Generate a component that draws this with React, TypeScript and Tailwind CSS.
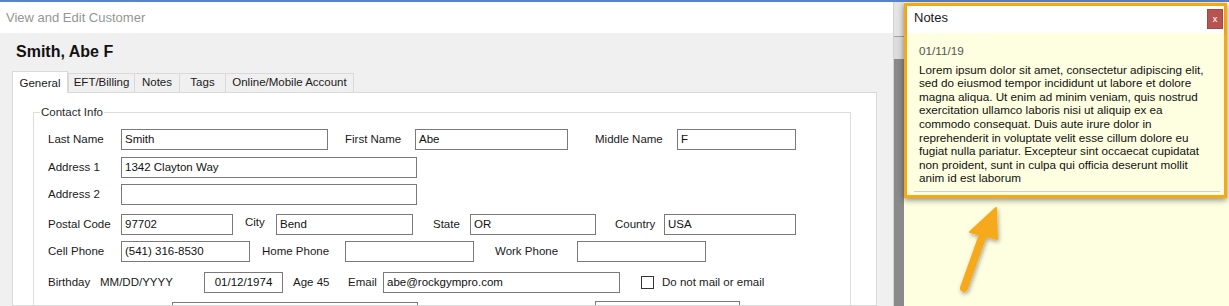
import React from 'react';

const font = "font-['Liberation_Sans',Arial,sans-serif]";

function Label({ className = '', children }: { className?: string; children?: React.ReactNode }) {
  return <span className={`shrink-0 whitespace-nowrap text-[11.5px] text-[#1a1a1a] ${className}`}>{children}</span>;
}

function Box({ className = '', value = '', center = false }: { className?: string; value?: string; center?: boolean }) {
  return (
    <div
      className={`h-[21px] shrink-0 border border-[#7a7a7a] bg-white px-[3px] text-[11.5px] leading-[19px] text-[#111] whitespace-nowrap overflow-hidden ${
        center ? 'text-center' : ''
      } ${className}`}
    >
      {value}
    </div>
  );
}

const tabs = [
  { name: 'EFT/Billing', w: 'w-[67px]' },
  { name: 'Notes', w: 'w-[45px]' },
  { name: 'Tags', w: 'w-[46px]' },
  { name: 'Online/Mobile Account', w: 'w-[128px]' },
];

const noteLines = [
  'Lorem ipsum dolor sit amet, consectetur adipiscing elit,',
  'sed do eiusmod tempor incididunt ut labore et dolore',
  'magna aliqua. Ut enim ad minim veniam, quis nostrud',
  'exercitation ullamco laboris nisi ut aliquip ex ea',
  'commodo consequat. Duis aute irure dolor in',
  'reprehenderit in voluptate velit esse cillum dolore eu',
  'fugiat nulla pariatur. Excepteur sint occaecat cupidatat',
  'non proident, sunt in culpa qui officia deserunt mollit',
  'anim id est laborum',
];

export default function App() {
  return (
    <div className={`flex h-[306px] w-[1229px] flex-col overflow-hidden bg-[#fefee0] ${font}`}>
      {/* desktop strip behind the dialog */}
      <div className="h-[2px] shrink-0 bg-[#5882c9]" />

      <div className="flex min-h-0 flex-1">
        {/* customer window */}
        <div className="flex w-[893px] shrink-0 flex-col">
          <div className="flex h-[31px] shrink-0 items-center bg-white pl-[6px] text-[13px] text-[#959595]">
            View and Edit Customer
          </div>

          <div className="flex min-h-0 flex-1 flex-col bg-[#f0f0f0] px-[12px] pt-[9px]">
            <h1 className="ml-[4px] text-[16px] font-bold leading-[20px] text-[#111]">Smith, Abe F</h1>

            <div className="mt-[9px] flex h-[21px] items-end text-[11.5px] text-[#1a1a1a]">
              <div className="relative z-10 -mb-px flex h-[22px] w-[56px] items-start justify-center border border-b-0 border-[#d9d9d9] bg-white pt-[3px]">
                General
              </div>
              {tabs.map((t, i) => (
                <div
                  key={t.name}
                  className={`flex h-[19px] items-center justify-center border-t border-r border-[#d9d9d9] bg-[#f0f0f0] ${t.w} ${
                    i === 0 ? 'border-l' : ''
                  }`}
                >
                  {t.name}
                </div>
              ))}
            </div>

            <div className="min-h-0 w-[865px] flex-1 overflow-hidden border border-[#d9d9d9] bg-white">
              <fieldset className="ml-[20px] mt-[12px] h-[400px] w-[818px] border border-[#dcdcdc] p-0">
                <legend className="ml-[6px] px-[1px] text-[11.5px] leading-[14px] text-[#2a2a2a]">Contact Info</legend>
                <div className="px-[14px] pt-[10px]">
                  <div className="flex h-[21px] items-center">
                    <Label className="w-[73px]">Last Name</Label>
                    <Box className="w-[207px]" value="Smith" />
                    <Label className="ml-[17px] w-[70px]">First Name</Label>
                    <Box className="w-[153px]" value="Abe" />
                    <Label className="ml-[27px] w-[82px]">Middle Name</Label>
                    <Box className="w-[119px]" value="F" />
                  </div>

                  <div className="mt-[7px] flex h-[21px] items-center">
                    <Label className="w-[73px]">Address 1</Label>
                    <Box className="w-[296px]" value="1342 Clayton Way" />
                  </div>

                  <div className="mt-[6px] flex h-[21px] items-center">
                    <Label className="w-[73px]">Address 2</Label>
                    <Box className="w-[296px]" />
                  </div>

                  <div className="mt-[9px] flex h-[21px] items-center">
                    <Label className="w-[73px]">Postal Code</Label>
                    <Box className="w-[112px]" value="97702" />
                    <Label className="mb-[4px] ml-[12px] w-[31px]">City</Label>
                    <Box className="w-[137px]" value="Bend" />
                    <Label className="ml-[20px] w-[37px]">State</Label>
                    <Box className="w-[126px]" value="OR" />
                    <Label className="ml-[19px] w-[49px]">Country</Label>
                    <Box className="w-[132px]" value="USA" />
                  </div>

                  <div className="mt-[6px] flex h-[21px] items-center">
                    <Label className="w-[73px]">Cell Phone</Label>
                    <Box className="w-[129px]" value="(541) 316-8530" />
                    <Label className="ml-[12px] w-[83px]">Home Phone</Label>
                    <Box className="w-[129px]" />
                    <Label className="ml-[21px] w-[82px]">Work Phone</Label>
                    <Box className="w-[129px]" />
                  </div>

                  <div className="mt-[10px] flex h-[21px] items-center">
                    <Label className="w-[52px]">Birthday</Label>
                    <Label className="w-[104px]">MM/DD/YYYY</Label>
                    <Box className="w-[79px]" value="01/12/1974" center />
                    <Label className="ml-[10px] w-[55px]">Age 45</Label>
                    <Label className="w-[35px]">Email</Label>
                    <Box className="w-[237px]" value="abe@rockgympro.com" />
                    <div className="ml-[21px] h-[13px] w-[13px] shrink-0 border border-[#333] bg-white" />
                    <Label className="ml-[8px]">Do not mail or email</Label>
                  </div>

                  <div className="mt-[9px] flex h-[21px] items-start">
                    <div className="w-[124px] shrink-0" />
                    <Box className="w-[246px]" />
                    <div className="w-[177px] shrink-0" />
                    <Box className="-mt-px w-[145px]" />
                  </div>
                </div>
              </fieldset>
            </div>
          </div>
        </div>

        {/* splitter between the windows */}
        <div className="flex w-[11px] shrink-0 flex-col border-l border-[#d2d2d2]">
          <div className="h-[35px] border-b border-[#a0a0a0] bg-[#e4e4e4]" />
          <div className="h-[22px] bg-[#dcdcdc]" />
          <div className="flex-1 bg-[#8a8a8a]" />
        </div>

        {/* notes side panel */}
        <div className="relative min-w-0 flex-1 bg-[#fefee0] pr-[2px] pt-[1px]">
          <div className="border-[3px] border-[#f6a912] shadow-[0_2px_6px_rgba(0,0,0,0.45)]">
            <div className="flex h-[27px] items-start justify-between bg-white pl-[7px] pr-px shadow-[0_1px_2px_rgba(0,0,0,0.15)]">
              <span className="mt-[2px] text-[13px] text-[#1a1a1a]">Notes</span>
              <button className="mt-[3px] flex h-[20px] w-[16px] items-center justify-center border border-[#a34744] bg-[#b9534f] text-[9px] font-bold leading-none text-[#f3dcdc]">
                x
              </button>
            </div>
            <div className="bg-[#fefee0] pt-[11px]">
              <div className="px-[12px] text-[11.7px] leading-[13.6px]">
                <div className="text-[#555]">01/11/19</div>
                <div className="mt-[5px] text-[#111]">
                  {noteLines.map((l) => (
                    <div key={l} className="whitespace-nowrap">
                      {l}
                    </div>
                  ))}
                </div>
              </div>
              <div className="ml-[7px] mr-[4px] mt-[6px] h-px bg-[#cfcfcf]" />
              <div className="h-[3px]" />
            </div>
          </div>

          <svg className="pointer-events-none absolute inset-0 h-full w-full" viewBox="0 0 325 304">
            <defs>
              <filter id="arrowShadow" x="-50%" y="-50%" width="200%" height="200%">
                <feDropShadow dx="1" dy="2" stdDeviation="2" floodColor="#000" floodOpacity="0.35" />
              </filter>
            </defs>
            <g filter="url(#arrowShadow)" fill="#f6a91a" stroke="#f6a91a">
              <line x1="80" y1="230" x2="60" y2="286" strokeWidth="8" strokeLinecap="round" />
              <polygon points="92,206 66,230 93,237" strokeWidth="2" strokeLinejoin="round" />
            </g>
          </svg>
        </div>
      </div>
    </div>
  );
}
